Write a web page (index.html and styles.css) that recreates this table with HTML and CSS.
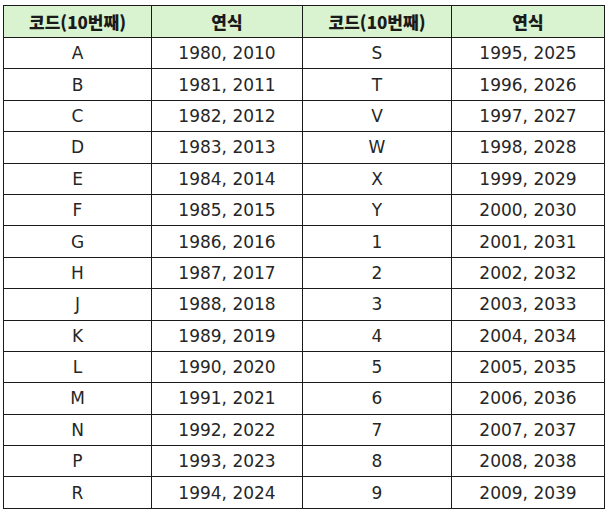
FILE: index.html
```html
<!DOCTYPE html>
<html lang="ko">
<head>
<meta charset="utf-8">
<link rel="stylesheet" href="styles.css">
</head>
<body>
<table class="codes">
  <colgroup>
    <col class="c1"><col class="c2"><col class="c3"><col class="c4">
  </colgroup>
  <thead>
    <tr><th>코드(10번째)</th><th>연식</th><th>코드(10번째)</th><th>연식</th></tr>
  </thead>
  <tbody>
    <tr><td>A</td><td>1980, 2010</td><td>S</td><td>1995, 2025</td></tr>
    <tr><td>B</td><td>1981, 2011</td><td>T</td><td>1996, 2026</td></tr>
    <tr><td>C</td><td>1982, 2012</td><td>V</td><td>1997, 2027</td></tr>
    <tr><td>D</td><td>1983, 2013</td><td>W</td><td>1998, 2028</td></tr>
    <tr><td>E</td><td>1984, 2014</td><td>X</td><td>1999, 2029</td></tr>
    <tr><td>F</td><td>1985, 2015</td><td>Y</td><td>2000, 2030</td></tr>
    <tr><td>G</td><td>1986, 2016</td><td>1</td><td>2001, 2031</td></tr>
    <tr><td>H</td><td>1987, 2017</td><td>2</td><td>2002, 2032</td></tr>
    <tr><td>J</td><td>1988, 2018</td><td>3</td><td>2003, 2033</td></tr>
    <tr><td>K</td><td>1989, 2019</td><td>4</td><td>2004, 2034</td></tr>
    <tr><td>L</td><td>1990, 2020</td><td>5</td><td>2005, 2035</td></tr>
    <tr><td>M</td><td>1991, 2021</td><td>6</td><td>2006, 2036</td></tr>
    <tr><td>N</td><td>1992, 2022</td><td>7</td><td>2007, 2037</td></tr>
    <tr><td>P</td><td>1993, 2023</td><td>8</td><td>2008, 2038</td></tr>
    <tr><td>R</td><td>1994, 2024</td><td>9</td><td>2009, 2039</td></tr>
  </tbody>
</table>
</body>
</html>
```
FILE: styles.css
```css
html, body {
  margin: 0;
  padding: 0;
  background: #ffffff;
}
body {
  padding: 5px 0 0 3px;
}
.codes {
  border-collapse: collapse;
  width: 601px;
  table-layout: fixed;
  font-family: "DejaVu Sans", "Noto Sans CJK KR", sans-serif;
  color: #262626;
}
.c1 { width: 148px; }
.c2 { width: 151px; }
.c3 { width: 149px; }
.c4 { width: 153px; }
.codes th, .codes td {
  border: 1px solid #1a1a1a;
  text-align: center;
  padding: 0;
}
.codes th {
  height: 31px;
  background: #d9f2d0;
  font-family: "Noto Sans CJK KR", sans-serif;
  font-weight: 900;
  font-size: 17px;
  color: #1a1a1a;
}
.codes td {
  height: 30.4px;
  font-size: 17px;
  font-weight: 400;
}
```
